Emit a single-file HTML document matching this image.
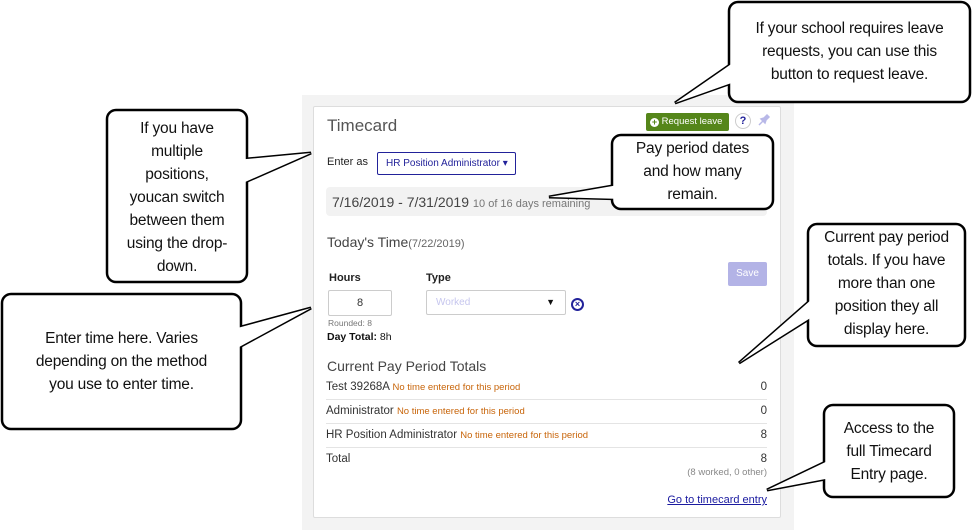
<!DOCTYPE html>
<html><head><meta charset="utf-8"><style>
*{margin:0;padding:0;box-sizing:border-box}
body{width:974px;height:530px;background:#fff;position:relative;overflow:hidden;font-family:"Liberation Sans",sans-serif}
.a{position:absolute}
.panel{left:302px;top:95px;width:492px;height:435px;background:#f3f3f3}
.card{left:313px;top:106px;width:468px;height:412px;background:#fff;border:1px solid #ddd;border-radius:2px}
.t{white-space:nowrap}
.row{left:326px;width:441px;height:24px;border-bottom:1px solid #e4e4e4;font-size:11.5px;color:#333}
.row .o{color:#c8650a;font-size:9.5px}
.row .n{position:absolute;right:0;top:5px}
.cb{position:absolute;text-align:center;font-size:15.5px;line-height:23px;color:#111;letter-spacing:-0.2px}
</style></head><body>
<div class="a panel"></div>
<div class="a card"></div>
<div class="a t" style="left:327px;top:116px;font-size:17px;color:#555">Timecard</div>
<div class="a t" style="left:646px;top:113px;width:83px;height:18px;background:#55861a;border-radius:2px;color:#fff;font-size:9.5px;line-height:18px;padding-left:4px"><span style="display:inline-block;width:9px;height:9px;border-radius:50%;background:#fff;color:#55861a;font-size:9px;line-height:9px;text-align:center;font-weight:bold;vertical-align:-1px">+</span> Request leave</div>
<div class="a" style="left:735px;top:113px;width:16px;height:16px;border:1px solid #ccc;border-radius:50%;color:#22229a;font-size:11px;font-weight:bold;text-align:center;line-height:14px">?</div>
<svg class="a" style="left:757px;top:113px" width="14" height="14"><path d="M2 12 L6 8 M4 6 L8 10 L9 7 L12 4 L10 2 L7 5 Z" stroke="#b8b8e8" stroke-width="1.5" fill="#b8b8e8"/></svg>
<div class="a t" style="left:327px;top:156px;font-size:11px;color:#222">Enter as</div>
<div class="a t" style="left:377px;top:152px;width:139px;height:23px;border:1px solid #22229a;border-radius:2px;color:#22229a;font-size:10px;line-height:21px;padding-left:8px">HR Position Administrator &#9662;</div>
<div class="a" style="left:326px;top:187px;width:441px;height:29px;background:#f2f2f2;border-radius:4px"></div>
<div class="a t" style="left:332px;top:194px;font-size:14px;color:#444">7/16/2019 - 7/31/2019 <span style="font-size:11px;color:#777">10 of 16 days remaining</span></div>
<div class="a t" style="left:327px;top:234px;font-size:14px;color:#444">Today's Time<span style="font-size:11px;color:#666">(7/22/2019)</span></div>
<div class="a" style="left:728px;top:262px;width:39px;height:24px;background:#b3b3e6;border-radius:2px;color:#fff;font-size:10px;text-align:center;line-height:24px">Save</div>
<div class="a t" style="left:329px;top:272px;font-size:11px;font-weight:bold;color:#222">Hours</div>
<div class="a t" style="left:426px;top:272px;font-size:11px;font-weight:bold;color:#222">Type</div>
<div class="a" style="left:328px;top:290px;width:64px;height:26px;border:1px solid #ccc;border-radius:2px;font-size:11px;text-align:center;line-height:24px;color:#333">8</div>
<div class="a" style="left:426px;top:290px;width:140px;height:25px;border:1px solid #ccc;border-radius:2px;font-size:10px;line-height:23px;color:#c6c6ee;padding-left:9px">Worked<span style="position:absolute;right:10px;top:0;color:#111;font-size:9px">&#9660;</span></div>
<div class="a" style="left:571px;top:298px;width:13px;height:13px;border:2px solid #22229a;border-radius:50%;color:#22229a;font-size:9px;font-weight:bold;text-align:center;line-height:9px">×</div>
<div class="a t" style="left:328px;top:318px;font-size:8.5px;color:#777">Rounded: 8</div>
<div class="a t" style="left:327px;top:331px;font-size:10.5px;color:#111"><b>Day Total:</b> 8h</div>
<div class="a t" style="left:327px;top:358px;font-size:14px;color:#444">Current Pay Period Totals</div>
<div class="a row t" style="top:376px"><span style="position:relative;top:5px">Test 39268A <span class="o">No time entered for this period</span></span><span class="n">0</span></div>
<div class="a row t" style="top:400px"><span style="position:relative;top:5px">Administrator <span class="o">No time entered for this period</span></span><span class="n">0</span></div>
<div class="a row t" style="top:424px"><span style="position:relative;top:5px">HR Position Administrator <span class="o">No time entered for this period</span></span><span class="n">8</span></div>
<div class="a row t" style="top:448px;border:none"><span style="position:relative;top:5px">Total</span><span class="n">8</span></div>
<div class="a t" style="right:207px;top:467px;font-size:9.5px;color:#888">(8 worked, 0 other)</div>
<div class="a t" style="right:207px;top:494px;font-size:11px;color:#1a1aa0;text-decoration:underline">Go to timecard entry</div>

<svg class="a" style="left:0;top:0" width="974" height="530">
<g fill="#fff" stroke="#000" stroke-width="3" stroke-linejoin="miter">
<polygon points="740,58 675,103 740,80"/>
<polygon points="236,160 311,153 236,186"/>
<polygon points="230,330 311,308 230,352"/>
<polygon points="624,184 549,197 624,199"/>
<polygon points="820,292 739,363 820,312"/>
<polygon points="836,457 767,490 836,477"/>
</g>
<g fill="#fff" stroke="#000" stroke-width="2.5">
<rect x="729" y="2" width="241" height="100" rx="9"/>
<rect x="107" y="110" width="140" height="172" rx="9"/>
<rect x="2" y="294" width="239" height="135" rx="9"/>
<rect x="612" y="135" width="161" height="74" rx="9"/>
<rect x="808" y="224" width="157" height="122" rx="9"/>
<rect x="824" y="405" width="130" height="92" rx="9"/>
</g>
<g fill="#fff">
<polygon points="740,58 675,103 740,80"/>
<polygon points="236,160 311,153 236,186"/>
<polygon points="230,330 311,308 230,352"/>
<polygon points="624,184 549,197 624,199"/>
<polygon points="820,292 739,363 820,312"/>
<polygon points="836,457 767,490 836,477"/>
</g>
</svg>
<div class="cb" style="left:729px;top:17px;width:241px">If your school requires leave<br>requests, you can use this<br>button to request leave.</div>
<div class="cb" style="left:107px;top:117px;width:140px">If you have<br>multiple<br>positions,<br>youcan switch<br>between them<br>using the drop-<br>down.</div>
<div class="cb" style="left:2px;top:327px;width:239px">Enter time here. Varies<br>depending on the method<br>you use to enter time.</div>
<div class="cb" style="left:612px;top:137px;width:161px">Pay period dates<br>and how many<br>remain.</div>
<div class="cb" style="left:808px;top:226px;width:157px">Current pay period<br>totals. If you have<br>more than one<br>position they all<br>display here.</div>
<div class="cb" style="left:824px;top:417px;width:130px">Access to the<br>full Timecard<br>Entry page.</div>
</body></html>
